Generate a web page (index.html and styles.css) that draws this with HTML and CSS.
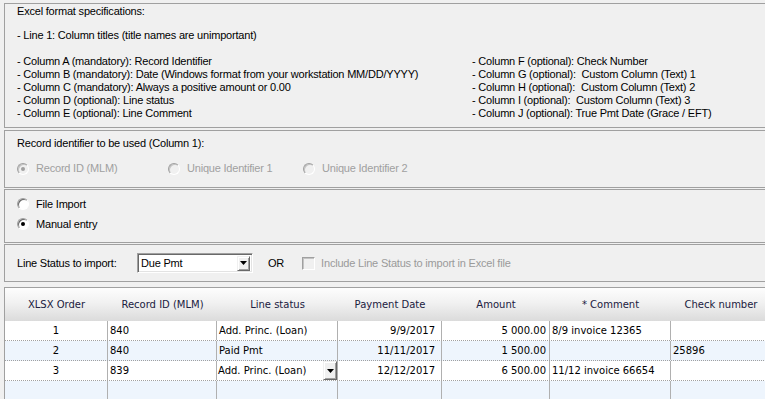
FILE: index.html
```html
<!DOCTYPE html>
<html lang="en">
<head>
  <meta charset="UTF-8" />
  <title>Excel import</title>
  <link rel="stylesheet" href="styles.css">
</head>
<body>
<div class="form">

  <!-- format notes -->
  <div class="panel spec">
    <div>Excel format specifications:</div>
    <div class="spec-line1">- Line 1: Column titles (title names are unimportant)</div>
    <div class="spec-cols">
      <div class="spec-left">
        <div>- Column A (mandatory): Record Identifier</div>
        <div>- Column B (mandatory): Date (Windows format from your workstation MM/DD/YYYY)</div>
        <div>- Column C (mandatory): Always a positive amount or 0.00</div>
        <div>- Column D (optional): Line status</div>
        <div>- Column E (optional): Line Comment</div>
      </div>
      <div class="spec-right">
        <div>- Column F (optional): Check Number</div>
        <div>- Column G (optional):&nbsp; Custom Column (Text) 1</div>
        <div>- Column H (optional):&nbsp; Custom Column (Text) 2</div>
        <div>- Column I (optional):&nbsp; Custom Column (Text) 3</div>
        <div>- Column J (optional): True Pmt Date (Grace / EFT)</div>
      </div>
    </div>
  </div>

  <!-- identifier choice -->
  <div class="panel ident">
    <div>Record identifier to be used (Column 1):</div>
    <div class="ident-row">
      <label class="opt opt-first disabled"><span class="radio checked"></span>Record ID (MLM)</label>
      <label class="opt opt-second disabled"><span class="radio"></span>Unique Identifier 1</label>
      <label class="opt disabled"><span class="radio"></span>Unique Identifier 2</label>
    </div>
  </div>

  <!-- import mode -->
  <div class="panel mode">
    <label class="opt mode-row"><span class="radio"></span>File Import</label>
    <label class="opt mode-row"><span class="radio checked"></span>Manual entry</label>
  </div>

  <!-- line status -->
  <div class="panel status">
    <span class="status-label">Line Status to import:</span>
    <div class="combo">
      <span>Due Pmt</span>
      <span class="combo-btn"><svg width="7" height="4" viewBox="0 0 7 4"><path d="M0 0h7L3.5 4z"/></svg></span>
    </div>
    <span class="or">OR</span>
    <span class="check"></span>
    <span class="check-label">Include Line Status to import in Excel file</span>
  </div>

  <!-- entry grid -->
  <div class="grid">
    <div class="grid-row grid-head">
      <div>XLSX Order</div>
      <div>Record ID (MLM)</div>
      <div>Line status</div>
      <div>Payment Date</div>
      <div>Amount</div>
      <div>* Comment</div>
      <div>Check number</div>
    </div>
    <div class="grid-row">
      <div class="c-center">1</div>
      <div>840</div>
      <div>Add. Princ. (Loan)</div>
      <div class="c-date">9/9/2017</div>
      <div class="c-amount">5 000.00</div>
      <div>8/9 invoice 12365</div>
      <div></div>
    </div>
    <div class="grid-row alt">
      <div class="c-center">2</div>
      <div>840</div>
      <div>Paid Pmt</div>
      <div class="c-date">11/11/2017</div>
      <div class="c-amount">1 500.00</div>
      <div></div>
      <div>25896</div>
    </div>
    <div class="grid-row">
      <div class="c-center">3</div>
      <div>839</div>
      <div class="c-edit">Add. Princ. (Loan)<span class="drop"><svg width="7" height="4" viewBox="0 0 7 4"><path d="M0 0h7L3.5 4z"/></svg></span></div>
      <div class="c-date">12/12/2017</div>
      <div class="c-amount">6 500.00</div>
      <div>11/12 invoice 66654</div>
      <div></div>
    </div>
    <div class="grid-row alt">
      <div></div><div></div><div></div><div></div><div></div><div></div><div></div>
    </div>
  </div>

</div>
</body>
</html>
```

FILE: styles.css
```css
body {
  margin: 0;
  background: #f0f0f0;
  font-family: "Liberation Sans", Arial, sans-serif;
  font-size: 11px;
  letter-spacing: -0.2px;
  color: #000;
  overflow: hidden;
}

.form {
  width: 800px;
  padding: 3px 0 0 4px;
}

.panel {
  border: 1px solid #a0a0a0;
  box-sizing: border-box;
  line-height: 13px;
}

/* format notes */
.spec {
  height: 125px;
  padding: 1px 0 0 12px;
}

.spec-line1 {
  margin-top: 11px;
}

.spec-cols {
  display: flex;
  margin-top: 13px;
}

.spec-left {
  width: 455px;
}

/* radios */
.opt {
  display: flex;
  align-items: center;
  gap: 7px;
}

.opt.disabled {
  color: #a0a0a0;
}

.radio {
  position: relative;
  flex: none;
  width: 12px;
  height: 12px;
  box-sizing: border-box;
  border-radius: 50%;
  border: 1px solid;
  border-color: #a0a0a0 #fff #fff #a0a0a0;
  background: #fff;
  box-shadow: inset 1px 1px 0 #696969;
}

.radio.checked::after {
  content: "";
  position: absolute;
  left: 3px;
  top: 3px;
  width: 4px;
  height: 4px;
  border-radius: 50%;
  background: #000;
}

.disabled .radio {
  background: #f0f0f0;
  box-shadow: inset 1px 1px 0 #c4c4c4;
}

.disabled .radio.checked::after {
  background: #a0a0a0;
}

/* identifier */
.ident {
  height: 58px;
  margin-top: 2px;
  padding: 6px 0 0 12px;
}

.ident-row {
  display: flex;
  margin-top: 12px;
}

.opt-first {
  width: 151px;
}

.opt-second {
  width: 135px;
}

/* mode */
.mode {
  height: 54px;
  margin-top: 1px;
  padding: 4px 0 0 12px;
}

.mode-row {
  height: 20px;
}

/* line status */
.status {
  display: flex;
  align-items: center;
  height: 38px;
  margin-top: 1px;
  padding: 0 0 0 12px;
}

.status-label {
  width: 120px;
}

.combo {
  display: flex;
  align-items: center;
  justify-content: space-between;
  width: 116px;
  height: 20px;
  box-sizing: border-box;
  border: 1px solid;
  border-color: #a0a0a0 #fff #fff #a0a0a0;
  box-shadow: inset 1px 1px 0 #696969, inset -1px -1px 0 #e3e3e3;
  background: #fff;
  padding: 0 2px 0 3px;
}

.combo-btn, .drop {
  display: flex;
  align-items: center;
  justify-content: center;
  box-sizing: border-box;
  background: #f0f0f0;
  border: 1px solid;
  border-color: #f0f0f0 #696969 #696969 #f0f0f0;
  box-shadow: inset 1px 1px 0 #fff, inset -1px -1px 0 #a0a0a0;
}

.combo-btn {
  width: 13px;
  height: 15px;
}

.or {
  margin-left: 15px;
}

.check {
  width: 13px;
  height: 13px;
  box-sizing: border-box;
  margin-left: 18px;
  border: 1px solid;
  border-color: #a0a0a0 #fff #fff #a0a0a0;
  box-shadow: inset 1px 1px 0 #c4c4c4;
  background: #f0f0f0;
}

.check-label {
  margin-left: 6px;
  color: #9a9a9a;
}

/* grid */
.grid {
  margin-top: 5px;
  height: 120px;
  border-top: 1px solid #a0a0a0;
  border-left: 1px solid #a0a0a0;
  background: #eef5fd;
  font-family: "DejaVu Sans", Verdana, sans-serif;
  font-size: 10px;
  letter-spacing: 0;
}

.grid-row {
  display: grid;
  grid-template-columns: 103px 109px 121px 104px 108px 121px 100px;
  height: 20px;
  box-sizing: border-box;
  border-bottom: 1px dotted #a0a0a0;
  background: #fff;
}

.grid-row.alt {
  background: #eef5fd;
}

.grid-row > div {
  display: flex;
  align-items: center;
  box-sizing: border-box;
  padding: 0 2px;
  border-right: 1px solid #b0b0b0;
  white-space: nowrap;
  overflow: hidden;
}

.grid-head {
  height: 33px;
  border-bottom: none;
  background: linear-gradient(#fdfdfd, #f1f1f1 45%, #dbdbdb);
  color: #202040;
}

.grid-head > div {
  justify-content: center;
  border-right: none;
}

.c-center {
  justify-content: center;
}

.grid-row > .c-date {
  justify-content: flex-end;
  padding-right: 6px;
}

.grid-row > .c-amount {
  justify-content: flex-end;
  padding-right: 3px;
}

.grid-row > .c-edit {
  justify-content: space-between;
  padding: 0 0 0 1px;
}

.drop {
  width: 14px;
  height: 19px;
}
```
